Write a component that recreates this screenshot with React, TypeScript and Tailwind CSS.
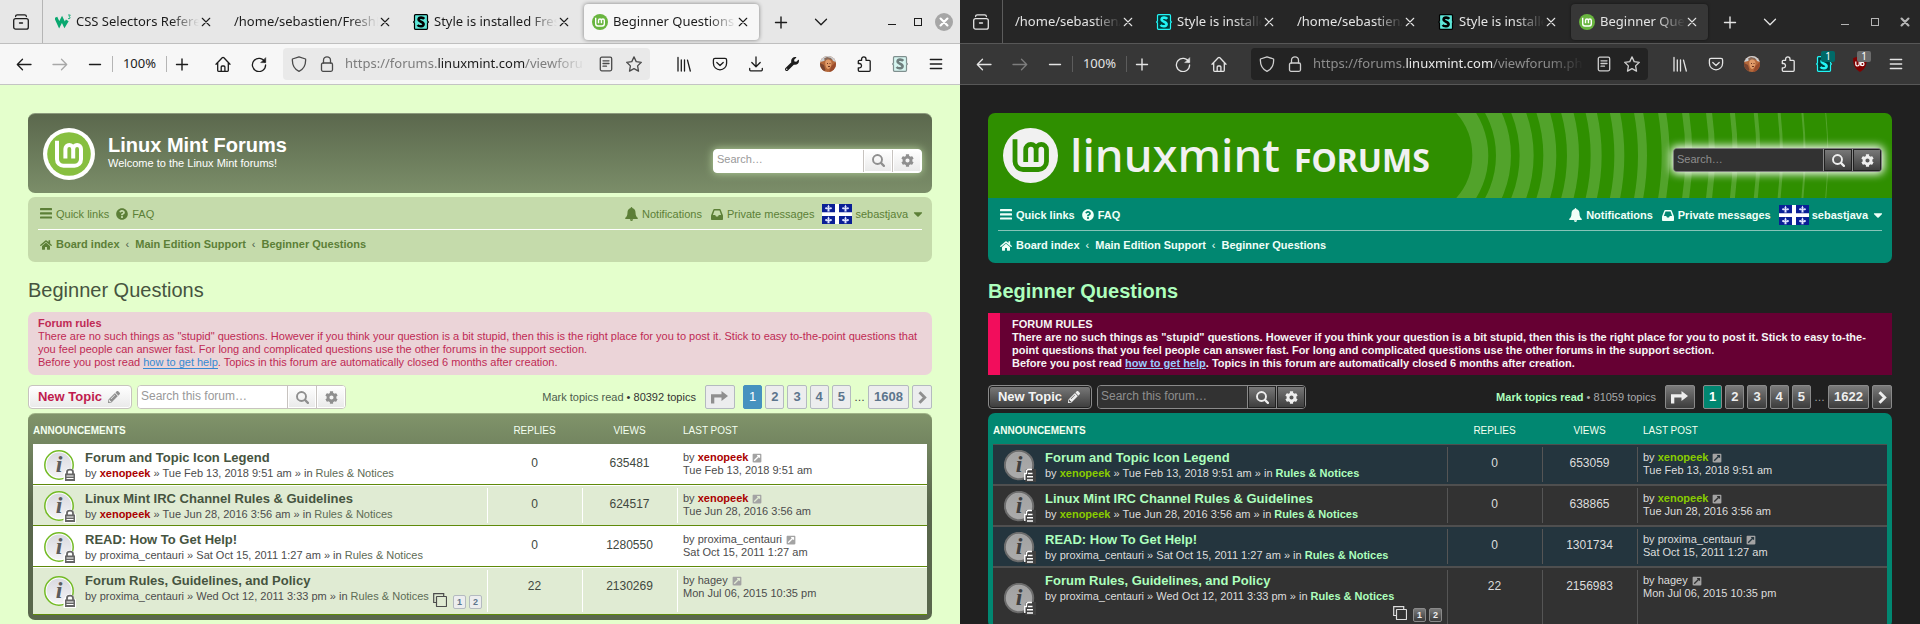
import React from "react";
import {
  FaQuestionCircle,
  FaHome,
  FaCog,
  FaPencilAlt,
  FaExternalLinkSquareAlt,
  FaCaretDown,
  FaWrench,
} from "react-icons/fa";

/* ---------- themes ---------- */

const light = {
  id: "light",
  window: "bg-[#e4ffcc] text-[#4c5d4d]",
  tabBar: "bg-[#e7e7e7] border-[#bfbfbf] text-[#1c1c1c]",
  divider: "bg-[#b5b5b5]",
  toolbar: "bg-[#f7f7f7] border-[#c4c4c4] text-[#1c1c1c]",
  activeTab: "bg-[#f7f7f7] shadow-[0_0_4px_rgba(0,0,0,0.45)]",
  dim: "text-[#a8a8a8]",
  urlBar: "bg-[#e9e9e9] text-[#4a4a4a]",
  urlSoft: "text-[#7c7c7c]",
  urlStrong: "text-[#1c1c1c]",
  url: "/viewforu",
  nav: "mt-1 rounded-[7px] bg-[#c5dbab] text-[#5c7f37]",
  navRow: "border-white font-normal pt-0.5",
  chevron: "text-[#4c5d4d]",
  heading: "text-[#46543f]",
  input: "bg-white text-[#333] placeholder:text-[#999]",
  headBox: "border-white bg-white shadow-[0_0_9px_#b9d69e]",
  forumBox: "border-[#c7c3bf] bg-white",
  boxButton: "border-[#c7c3bf] bg-linear-to-b from-white to-[#e9e9e9] text-[#8f8f8f] shadow-[inset_0_0_0_1px_#fff]",
  newTopic: "border-[#c7c3bf] bg-linear-to-b from-white to-[#e9e9e9] text-[#c01b4d] shadow-[inset_0_0_0_1px_#fff]",
  pencil: "text-[#8f8f8f]",
  mark: "text-[#4c5d4d]",
  count: "text-[#333]",
  page: "border-[#b4bac0] bg-[#ecedee] text-[#5c758c]",
  pageArrow: "text-[#8f8f8f]",
  pageOn: "border-[#4692bf] bg-[#4692bf] text-white font-normal",
  table: "border-t border-[#9fb387] bg-linear-to-b from-[#80946a] to-[#59674c] to-45% pb-[5px]",
  thead: "h-[30px]",
  rows: ["bg-white", "bg-[#e0ebd3]"],
  cell: "border-t border-t-white border-b border-b-[#5f8a0a]",
  sep: "bg-[linear-gradient(#fff,#fff)]",
  title: "text-[#46543f]",
  text: "text-[#4c4c4c]",
  user: "text-[#aa0000]",
  forum: "text-[#5d6b55]",
  num: "text-[#404840]",
  subRow: "flex items-start",
  subPages: "ml-auto mt-[5px]",
  ext: "text-[#a3a3a3]",
};

const dark: typeof light = {
  id: "dark",
  window: "bg-[#202020] text-[#dddddd]",
  tabBar: "bg-[#262626] border-[#575757] text-[#e4e4e4]",
  divider: "bg-[#5c5c5c]",
  toolbar: "bg-[#373737] border-[#575757] text-[#e4e4e4]",
  activeTab: "bg-[#373737] shadow-[0_0_3px_rgba(0,0,0,0.5)]",
  dim: "text-[#7d7d7d]",
  urlBar: "bg-[#232323] text-[#cfcfcf]",
  urlSoft: "text-[#8e8e8e]",
  urlStrong: "text-[#e8e8e8]",
  url: "/viewforum.php",
  nav: "rounded-b-[7px] bg-[#018771] text-[#f0fff8]",
  navRow: "border-[#86c4b8] font-bold pt-0.5",
  chevron: "text-[#f0fff8]",
  heading: "text-[#adffbd] font-bold",
  input: "bg-[#323232] text-[#ddd] placeholder:text-[#8e8e8e]",
  headBox: "border-[#7d7d7d] bg-[#323232] shadow-[0_0_8px_2px_#fff]",
  forumBox: "border-[#8a8a8a] bg-[#323232]",
  boxButton: "border-[#8a8a8a] bg-linear-to-b from-[#7b7b7b] to-[#3c3c3c] text-[#eeeeee] shadow-[inset_0_0_0_1px_#202020]",
  newTopic: "border-[#8a8a8a] bg-linear-to-b from-[#7b7b7b] to-[#3c3c3c] text-[#f4f4f4] shadow-[inset_0_0_0_1px_#202020]",
  pencil: "text-[#eeeeee]",
  mark: "text-[#adffbd] font-bold",
  count: "text-[#a9a9a9]",
  page: "border-[#8a8a8a] bg-linear-to-b from-[#7b7b7b] to-[#3c3c3c] text-[#eeeeee]",
  pageArrow: "text-[#eeeeee]",
  pageOn: "border-[#8a8a8a] bg-[#018771] text-white font-bold",
  table: "bg-[#018771]",
  thead: "h-[31px]",
  rows: ["bg-[#24353e]", "bg-[#323232]"],
  cell: "border-y border-[#4f4f4f]",
  sep: "bg-[linear-gradient(#555,#555)]",
  title: "text-[#adffbd]",
  text: "text-[#dddddd]",
  user: "text-[#88cc00]",
  forum: "text-[#adffbd] font-bold",
  num: "text-[#dddddd]",
  subRow: "flex flex-col items-start",
  subPages: "self-end mt-[5px]",
  ext: "text-[#a3a3a3]",
};

type Theme = typeof light;

/* ---------- icons ---------- */

function Icon({ children, size = 16, w = 1.3 }: { children: React.ReactNode; size?: number; w?: number }) {
  return (
    <svg
      width={size}
      height={size}
      viewBox="0 0 16 16"
      fill="none"
      stroke="currentColor"
      strokeWidth={w}
      strokeLinecap="round"
      strokeLinejoin="round"
      className="shrink-0"
      aria-hidden="true"
    >
      {children}
    </svg>
  );
}

const ArchiveIcon = () => (
  <Icon>
    <path d="M2.600 2.600Q2.600.800 4.400.800h7.200q1.800 0 1.800 1.800" strokeWidth="1.200" />
    <rect x=".7" y="4.600" width="14.600" height="10.600" rx="2" />
    <path d="M6.500 9h3" />
  </Icon>
);
const BackIcon = () => (
  <Icon>
    <path d="M15 8.5H1.5M6.5 3.3 1.3 8.500l5.200 5.200" />
  </Icon>
);
const ForwardIcon = () => (
  <Icon>
    <path d="M1 8.500h13.500M9.500 3.300l5.200 5.200-5.200 5.200" />
  </Icon>
);
const MinusIcon = () => (
  <Icon>
    <path d="M2.500 8.500h11" strokeWidth="1.400" />
  </Icon>
);
const PlusIcon = () => (
  <Icon>
    <path d="M2.500 8.500h11M8 3v11" strokeWidth="1.400" />
  </Icon>
);
const HomeOutline = () => (
  <Icon>
    <path d="m1 8.300 6.200-6.600a1.200 1.200 0 0 1 1.700 0L15 8.300M2.700 7v7.500a.8.8 0 0 0 .8.8h9a.8.8 0 0 0 .8-.8V7M6.200 15v-4a1 1 0 0 1 1-1h1.700a1 1 0 0 1 1 1v4" />
  </Icon>
);
const ReloadIcon = () => (
  <Icon>
    <path d="M13.900 6A6.600 6.600 0 1 0 14.600 9" />
    <path d="M14.700 2v4.600h-4.600z" fill="currentColor" strokeWidth=".6" />
  </Icon>
);
const ShieldIcon = () => (
  <Icon>
    <path d="M8 .8 14.600 3c.3 5-1.200 9.800-6.600 12.300C2.600 12.800 1.100 8 1.400 3z" />
  </Icon>
);
const LockIcon = () => (
  <Icon>
    <rect x="2.500" y="7" width="11" height="8.300" rx="1.500" />
    <path d="M4.500 7V4.300a3.500 3.500 0 0 1 7 0V7" />
  </Icon>
);
const ReaderIcon = () => (
  <Icon>
    <rect x="2.300" y="1.200" width="11.400" height="13.600" rx="1.500" />
    <path d="M5 4.800h6M5 7.500h6M5 10.200h3.500" />
  </Icon>
);
const StarIcon = () => (
  <Icon>
    <path d="m8 .9 2.200 4.700 5.100.7-3.700 3.600.9 5.200L8 12.600l-4.500 2.500.9-5.200L.7 6.300l5.100-.7z" />
  </Icon>
);
const LibraryIcon = () => (
  <Icon>
    <path d="M2 1.500v13.500M5.300 4v11M8.500 4v11M11.500 4.200 14.300 15" />
  </Icon>
);
const PocketIcon = () => (
  <Icon>
    <path d="M3 2.300h10a1.600 1.600 0 0 1 1.600 1.600v3.300a6.600 6.600 0 0 1-13.200 0V3.900A1.600 1.600 0 0 1 3 2.300z" />
    <path d="m4.800 6.500 3.200 3 3.200-3" />
  </Icon>
);
const DownloadIcon = () => (
  <Icon>
    <path d="M8 1v9.500M3.800 6.500 8 10.700l4.200-4.200M1.700 12.500v1.300a1 1 0 0 0 1 1h10.600a1 1 0 0 0 1-1v-1.300" />
  </Icon>
);
const PuzzleIcon = () => (
  <Icon>
    <path d="M5.600 4.300V3a2.200 2.200 0 0 1 4.400 0v1.300h3.200a1 1 0 0 1 1 1v9a1 1 0 0 1-1 1H3.300a1 1 0 0 1-1-1v-2.500h1.500a2.200 2.200 0 0 0 0-4.300H2.300V5.300a1 1 0 0 1 1-1z" />
  </Icon>
);
const MenuIcon = () => (
  <Icon>
    <path d="M2.300 3.500h11.400M2.300 8h11.400M2.300 12.500h11.400" />
  </Icon>
);
const ChevronIcon = () => (
  <Icon>
    <path d="m2.500 5.200 5.500 5.500 5.500-5.500" />
  </Icon>
);
const CloseIcon = () => (
  <Icon size={10}>
    <path d="m2 2 12 12M14 2 2 14" strokeWidth="1.800" />
  </Icon>
);

const BarsIcon = () => (
  <svg width="12" height="12" viewBox="0 0 12 12" fill="currentColor" className="shrink-0" aria-hidden="true">
    <rect y="0" width="12" height="2.200" rx=".5" />
    <rect y="4.200" width="12" height="2.200" rx=".5" />
    <rect y="8.400" width="12" height="2.200" rx=".5" />
  </svg>
);

const BellIcon = () => (
  <svg width="13" height="14" viewBox="0 0 13 14" fill="currentColor" className="shrink-0" aria-hidden="true">
    <path d="M6.500 0q.8 0 .8 1C9.600 1.500 10.500 3.500 10.500 5.500c0 3 1 4.500 2.500 5.500q0 1-1 1H1q-1 0-1-1c1.500-1 2.500-2.500 2.500-5.500 0-2 .9-4 3.200-4.500q0-1 .8-1zM4.900 12.300h3.200a1.600 1.600 0 0 1-3.200 0z" />
  </svg>
);

const InboxIcon = () => (
  <svg width="12" height="11" viewBox="0 0 12 11" className="shrink-0" aria-hidden="true">
    <path
      fill="currentColor"
      fillRule="evenodd"
      d="M2.400.5Q2.600 0 3.200 0h5.600q.6 0 .8.5L11.800 6q.2.400.2.900v3.300q0 .8-.8.800H.8Q0 11 0 10.200V6.900Q0 6.400.2 6zM3.500 1.600 1.900 6h2.300l.8 1.600h2L7.800 6h2.300L8.500 1.600z"
    />
  </svg>
);

const SearchIcon = () => (
  <svg width="13" height="13" viewBox="0 0 13 13" fill="none" stroke="currentColor" className="shrink-0" aria-hidden="true">
    <circle cx="5.500" cy="5.500" r="4.500" strokeWidth="1.900" />
    <path d="m8.900 8.900 3 3" strokeWidth="2.200" strokeLinecap="round" />
  </svg>
);

const NextIcon = () => (
  <svg width="9" height="13" viewBox="0 0 9 13" fill="none" stroke="currentColor" className="shrink-0" aria-hidden="true">
    <path d="m1.500 1.300 5.200 5.200-5.200 5.200" strokeWidth="2.900" />
  </svg>
);

function Avatar() {
  return (
    <svg width="16" height="16" viewBox="0 0 16 16" className="shrink-0" aria-hidden="true">
      <defs>
        <clipPath id="avatar-clip">
          <circle cx="8" cy="8" r="8" />
        </clipPath>
      </defs>
      <g clipPath="url(#avatar-clip)">
        <rect width="16" height="16" fill="#b5683a" />
        <path d="M0 0h16v6l-3-1-1-2-5-1-3 3-4 1z" fill="#c9cfd4" />
        <path d="M4 2.500 7 1l4 1 1 2-4-.5-3 1.500z" fill="#8a6a58" />
        <path d="M5.500 5c2-2.500 6-1.500 6 2s-2 6-3.500 6-3.500-4-2.500-8z" fill="#e09a68" />
        <path d="m0 7 4 2 1.500 5L3 16H0z" fill="#7a4530" />
        <path d="M7 7.500h1M9.500 7.500h1M8 10.500h2" stroke="#6b3520" />
        <path d="m11.500 10 4.500-4v10h-7z" fill="#9a4c2c" />
      </g>
    </svg>
  );
}

function StylusIcon({ box, ink, edge }: { box: string; ink: string; edge: string }) {
  return (
    <svg width="16" height="16" viewBox="0 0 16 16" className="shrink-0" aria-hidden="true">
      <path
        d="M1.500 1.700q0-1 1-1h11q1 0 1 1V7l1 1-1 1v5.300q0 1-1 1h-11q-1 0-1-1V9l-1-1 1-1z"
        fill={box}
        stroke={edge}
        strokeWidth="1.200"
      />
      <path
        d="M11.200 4.900C10 3.300 5.800 3 5.600 5.400 5.400 7.800 10.700 7.600 10.600 10.200 10.500 12.800 6.200 12.900 4.600 11"
        fill="none"
        stroke={ink}
        strokeWidth="2.600"
      />
    </svg>
  );
}

const W3Icon = () => (
  <svg width="16" height="16" viewBox="0 0 16 16" className="shrink-0" aria-hidden="true">
    <path d="M.8 3.500 4.200 10.800 7 5.300l2.600 5.500 2.700-4.400" fill="none" stroke="#0aa870" strokeWidth="3.200" />
    <path d="M13 1h2.300l-1.200 1.700q1.500.3.900 1.500-.7 1-2 .3" fill="none" stroke="#0aa870" strokeWidth=".9" />
  </svg>
);

const MintFavicon = () => (
  <svg width="16" height="16" viewBox="0 0 52 52" className="shrink-0" aria-hidden="true">
    <circle cx="26" cy="26" r="26" fill="#69b53f" />
    <path
      d="M12 12v20a7 7 0 0 0 7 7h14a7 7 0 0 0 7-7V21a4.700 4.700 0 0 0-9.400 0v9M30.600 21a4.700 4.700 0 0 0-9.400 0v9"
      fill="none"
      stroke="#fff"
      strokeWidth="4.500"
    />
  </svg>
);

const UblockIcon = () => (
  <svg width="16" height="16" viewBox="0 0 16 16" className="shrink-0" aria-hidden="true">
    <path d="M8 0 14.800 2c.4 6-1.600 11-6.800 14C2.800 13 .8 8 1.200 2z" fill="#800000" />
    <path d="M3.800 5.500v2.800a1.500 1.500 0 0 0 3.400 0V5.500v2.800M8.800 4v5.500" fill="none" stroke="#fff" strokeWidth="1.200" />
    <circle cx="10.300" cy="8" r="1.700" fill="none" stroke="#fff" strokeWidth="1.200" />
  </svg>
);

function MintLogo() {
  return (
    <svg width="52" height="52" viewBox="0 0 52 52" className="shrink-0" aria-hidden="true">
      <circle cx="26" cy="26" r="26" fill="#fff" />
      <circle cx="26" cy="26" r="21.800" fill="#87bf40" />
      <path
        d="M14 12.700v18.500a6.500 6.500 0 0 0 6.500 6.500h11a6.500 6.500 0 0 0 6.500-6.500V21a3.900 3.900 0 0 0-7.800 0v9.500M30.200 21a3.900 3.900 0 0 0-7.800 0v9.500"
        fill="none"
        stroke="#fff"
        strokeWidth="4"
      />
    </svg>
  );
}

function MintLogoFlat() {
  return (
    <svg width="55" height="55" viewBox="0 0 55 55" className="shrink-0" aria-hidden="true">
      <circle cx="27.500" cy="27.500" r="27.500" fill="#f1f1f1" />
      <path
        d="M12 11.300v22.200a8 8 0 0 0 8 8h15.500a8 8 0 0 0 8-8V21.500a5.200 5.200 0 0 0-10.400 0v12.500M33.100 21.500a5.200 5.200 0 0 0-10.400 0v12.500"
        fill="none"
        stroke="#2f8f00"
        strokeWidth="4.800"
      />
    </svg>
  );
}

const fleur = "M0-3.200Q1.500-1.500.6.200 1.500-1.300 3-.5 3.300.8 1.800 1H.7L1 2.800H-1L-.7 1H-1.800Q-3.300.8-3-.5-1.500-1.300-.6.200-1.500-1.500 0-3.200z";

function Flag() {
  const spots = [
    [6.500, 4.200],
    [23.500, 4.200],
    [6.500, 16],
    [23.500, 16],
  ];
  return (
    <svg width="30" height="20" viewBox="0 0 30 20" className="shrink-0" aria-hidden="true">
      <rect width="30" height="20" fill="#0a1f96" />
      <path d="M13 0h4v20h-4zM0 8.300h30v3.600H0z" fill="#fff" />
      {spots.map(([x, y]) => (
        <path key={`${x}-${y}`} d={fleur} transform={`translate(${x} ${y}) scale(1.150)`} fill="#dfe4ff" />
      ))}
    </svg>
  );
}

function TopicIcon({ theme }: { theme: Theme }) {
  const isLight = theme.id === "light";
  return (
    <svg width="32" height="32" viewBox="0 0 32 32" className="-mr-0.5 -mb-0.5 shrink-0" aria-hidden="true">
      <defs>
        <linearGradient id={`disc-${theme.id}`} x1="0" y1="0" x2="0" y2="1">
          <stop offset="0" stopColor={isLight ? "#d9d9df" : "#a2a2a2"} />
          <stop offset="1" stopColor={isLight ? "#f4f4f6" : "#ababab"} />
        </linearGradient>
      </defs>
      <circle cx="15" cy="15" r="14.200" fill={isLight ? "#fff" : "#a6a6a6"} stroke={isLight ? "#73ba25" : "#6c6c6c"} strokeWidth={isLight ? 1.500 : 2} />
      <circle cx="15" cy="15" r="12.500" fill={`url(#disc-${theme.id})`} />
      <text
        x="15"
        y="22"
        textAnchor="middle"
        className="font-['Liberation_Serif',serif] text-[24px] font-bold italic"
        fill={isLight ? "#5c5c5c" : "#3f3f3f"}
      >
        i
      </text>
      {isLight ? (
        <>
          <path d="M19.500 23q1.500-1 2-2.500 1-2.500 4-2.500t4.500 3v2h2v9H19.500z" fill="#fff" />
          <path d="M23 25v-3q0-2.300 3-2.300t3 2.300v3" fill="none" stroke="#666" strokeWidth="1.800" />
          <rect x="21" y="23.500" width="10" height="7.500" fill="#666" />
          <path d="M22.500 26h7M22.500 28.500h7" stroke="#fff" />
        </>
      ) : (
        <>
          <path d="M22 19h10v13H21v-8z" fill="#3f3f3f" />
          <path d="M20.800 30v-6.500h1.700v-2q0-2 2-2H28" fill="none" stroke="#fff" strokeWidth="1.400" />
          <path d="M24 23.500h4.500M23 26.800h6M23 30h6" stroke="#fff" strokeWidth="1.400" />
        </>
      )}
    </svg>
  );
}

const CloneIcon = () => (
  <svg width="14" height="14" viewBox="0 0 14 14" fill="none" stroke="currentColor" strokeWidth="1.200" aria-hidden="true">
    <path d="M3.500 9.500H.7V.7h10v2.800" />
    <rect x="3.500" y="3.500" width="10" height="10" rx=".5" />
  </svg>
);

const JumpIcon = () => (
  <svg width="17" height="13" viewBox="0 0 17 13" fill="currentColor" aria-hidden="true">
    <path d="M0 12.500V3.200h10.500V0L17 5l-6.500 5V6.500H3.300v6z" />
  </svg>
);

/* ---------- browser chrome ---------- */

interface TabInfo {
  title: string;
  icon?: React.ReactNode;
  active?: boolean;
}

function Tab({ tab, theme, width }: { tab: TabInfo; theme: Theme; width: string }) {
  return (
    <div className={`${width} min-w-0 px-0.5 py-1`}>
      <div className={`flex h-9 items-center gap-[5px] rounded pr-1.5 pl-2 ${tab.active ? theme.activeTab : ""}`}>
        {tab.icon}
        <span className="-mr-1 min-w-0 flex-1 overflow-hidden whitespace-nowrap [mask-image:linear-gradient(to_right,#000_calc(100%-28px),transparent)]">
          {tab.title}
        </span>
        <button aria-label="Close tab" className="-ml-1 flex h-5 w-5 shrink-0 items-center justify-center">
          <CloseIcon />
        </button>
      </div>
    </div>
  );
}

function BarButton({ label, children, className = "w-9" }: { label: string; children: React.ReactNode; className?: string }) {
  return (
    <button aria-label={label} className={`flex h-9 shrink-0 items-center justify-center ${className}`}>
      {children}
    </button>
  );
}

function Badge({ className }: { className: string }) {
  return (
    <span
      className={`absolute -top-[5px] left-[5px] h-[11px] w-[14px] rounded-[2px] text-center text-[10px] leading-[11px] text-white ${className}`}
    >
      1
    </span>
  );
}

function Chrome({ theme, tabs }: { theme: Theme; tabs: TabInfo[] }) {
  const isLight = theme.id === "light";
  return (
    <header className="font-['Noto_Sans',sans-serif] text-[13px]">
      <div className={`flex h-11 items-start border-b ${theme.tabBar}`}>
        <BarButton label="Recent browsing" className="h-11 w-[42px]">
          <ArchiveIcon />
        </BarButton>
        <div className={`mr-0.5 h-full w-px shrink-0 ${theme.divider}`} />
        {tabs.map((tab, i) => (
          <Tab key={i} tab={tab} theme={theme} width={isLight ? "w-[179px]" : "w-[141px]"} />
        ))}
        <BarButton label="New tab" className="h-11 w-10">
          <PlusIcon />
        </BarButton>
        <BarButton label="List all tabs" className="h-11 w-10">
          <ChevronIcon />
        </BarButton>
        <div className={`ml-auto flex items-center pt-1 ${isLight ? "pr-[3px]" : "pr-0 text-[#b5b5b5]"}`}>
          <BarButton label="Minimize" className={isLight ? "w-[26px]" : "w-[30px]"}>
            <span className="mt-[5px] h-px w-2 bg-current" />
          </BarButton>
          <BarButton label="Maximize" className={isLight ? "w-[26px]" : "w-[30px]"}>
            <span className="h-2 w-2 border border-current" />
          </BarButton>
          <BarButton label="Close window" className={isLight ? "w-[26px]" : "w-[30px]"}>
            <span className={`flex h-[18px] w-[18px] items-center justify-center rounded-full ${isLight ? "bg-[#a6a6a6] text-white" : ""}`}>
              <Icon size={10} w={3.500}>
                <path d="m2.500 2.500 11 11M13.500 2.500l-11 11" />
              </Icon>
            </span>
          </BarButton>
        </div>
      </div>
      <div className={`flex h-[41px] items-center border-b px-1.5 ${theme.toolbar}`}>
        <BarButton label="Back">
          <BackIcon />
        </BarButton>
        <BarButton label="Forward" className={`w-9 ${theme.dim}`}>
          <ForwardIcon />
        </BarButton>
        <BarButton label="Zoom out" className="w-[34px]">
          <MinusIcon />
        </BarButton>
        <div className={`h-4 w-px shrink-0 ${theme.divider}`} />
        <button className="h-9 w-[53px] shrink-0 text-center">100%</button>
        <div className={`h-4 w-px shrink-0 ${theme.divider}`} />
        <BarButton label="Zoom in" className="mr-2 w-[30px]">
          <PlusIcon />
        </BarButton>
        <BarButton label={isLight ? "Home" : "Reload"}>{isLight ? <HomeOutline /> : <ReloadIcon />}</BarButton>
        <BarButton label={isLight ? "Reload" : "Home"}>{isLight ? <ReloadIcon /> : <HomeOutline />}</BarButton>
        <div
          className={`flex h-8 min-w-0 flex-1 items-center rounded px-2 ${theme.urlBar} ${isLight ? "mr-4 ml-1.5" : "mr-[14px] ml-[14px]"}`}
        >
          <ShieldIcon />
          <span className="w-3 shrink-0" />
          <LockIcon />
          <span
            className={`ml-[10px] min-w-0 flex-1 overflow-hidden whitespace-nowrap [mask-image:linear-gradient(to_right,#000_calc(100%-36px),transparent)] ${theme.urlSoft}`}
          >
            https://forums.<span className={theme.urlStrong}>linuxmint.com</span>
            {theme.url}
          </span>
          <BarButton label="Reader view" className="ml-1.5 w-7">
            <ReaderIcon />
          </BarButton>
          <BarButton label="Bookmark" className="-mr-1.5 w-7">
            <StarIcon />
          </BarButton>
        </div>
        <BarButton label="Library">
          <LibraryIcon />
        </BarButton>
        <BarButton label="Pocket">
          <PocketIcon />
        </BarButton>
        {isLight && (
          <>
            <BarButton label="Downloads">
              <DownloadIcon />
            </BarButton>
            <BarButton label="Tools">
              <FaWrench size={14} />
            </BarButton>
          </>
        )}
        <BarButton label="Account">
          <Avatar />
        </BarButton>
        <BarButton label="Extensions">
          <PuzzleIcon />
        </BarButton>
        {isLight ? (
          <BarButton label="Stylus">
            <StylusIcon box="#d6f5f0" ink="#6f7f7e" edge="#7f8f8e" />
          </BarButton>
        ) : (
          <>
            <BarButton label="Stylus">
              <span className="relative">
                <StylusIcon box="#003a3a" ink="#22f5f5" edge="#22f5f5" />
                <Badge className="bg-[#006a68]" />
              </span>
            </BarButton>
            <BarButton label="uBlock">
              <span className="relative">
                <UblockIcon />
                <Badge className="bg-[#6b6b6b]" />
              </span>
            </BarButton>
          </>
        )}
        <BarButton label="Menu">
          <MenuIcon />
        </BarButton>
      </div>
    </header>
  );
}

/* ---------- forum page ---------- */

function SearchBox({ theme, frame, label, input }: { theme: Theme; frame: string; label: string; input: string }) {
  return (
    <form className={`flex h-6 w-[209px] overflow-hidden rounded border ${frame}`} onSubmit={(e) => e.preventDefault()}>
      <input type="search" aria-label={label} placeholder={label} className={`min-w-0 flex-1 px-[3px] pb-0.5 outline-none ${input} ${theme.input}`} />
      <button aria-label="Search" className={`flex w-[29px] items-center justify-center border-l ${theme.boxButton}`}>
        <SearchIcon />
      </button>
      <button aria-label="Advanced search" className={`flex w-[29px] items-center justify-center border-l ${theme.boxButton}`}>
        <FaCog size={13} />
      </button>
    </form>
  );
}

function LightBanner() {
  return (
    <div className="flex h-20 items-center rounded-[7px] border-t border-[#8c9a7d] bg-linear-to-b from-[#5b684d] to-[#7b8e69] pr-2.5 pl-[15px]">
      <MintLogo />
      <div className="ml-[13px] pb-1 text-white">
        <h1 className="text-[20px] leading-[24px] font-bold">Linux Mint Forums</h1>
        <p className="text-[11px] leading-[13px]">Welcome to the Linux Mint forums!</p>
      </div>
      <div className="ml-auto pt-[14px]">
        <SearchBox theme={light} frame={light.headBox} label="Search…" input="text-[11px]" />
      </div>
    </div>
  );
}

function DarkBanner() {
  const bands = Array.from({ length: 16 }, (_, k) => ({ r: 72.300 + 23.170 * k, w: 16 - k }));
  return (
    <div className="relative flex h-[85px] items-center overflow-hidden rounded-t-[7px] bg-[#2f8f00] pr-2.5 pl-[15px]">
      <svg className="absolute top-0 right-0" width="484" height="85" viewBox="0 0 484 85" aria-hidden="true">
        {bands.map((b) => (
          <circle key={b.r} cx="0" cy="42.500" r={b.r} fill="none" stroke="#52a32b" strokeWidth={b.w} />
        ))}
      </svg>
      <MintLogoFlat />
      <h1 className="ml-3 flex items-baseline gap-3.5 pt-0.5 font-['Noto_Sans',sans-serif] leading-[60px] text-[#f1f1f1]">
        <span className="text-[46px] font-medium">linuxmint</span>
        <span className="text-[32px] font-bold">FORUMS</span>
      </h1>
      <div className="relative ml-auto pt-[9px]">
        <SearchBox theme={dark} frame={dark.headBox} label="Search…" input="text-[11px]" />
      </div>
    </div>
  );
}

function NavBar({ theme }: { theme: Theme }) {
  const link = "flex items-center gap-1";
  return (
    <nav className={`px-2.5 pb-[11px] text-[11px] leading-[13px] ${theme.nav}`}>
      <div className={`flex h-[33px] items-center border-b pl-0.5 ${theme.navRow}`}>
        <a href="#quick" className={link}>
          <BarsIcon />
          Quick links
        </a>
        <a href="#faq" className={`${link} ml-[7px]`}>
          <FaQuestionCircle size={12} />
          FAQ
        </a>
        <a href="#notifications" className={`${link} ml-auto`}>
          <BellIcon />
          Notifications
        </a>
        <a href="#messages" className={`${link} ml-[9px]`}>
          <InboxIcon />
          Private messages
        </a>
        <a href="#user" className="ml-2 flex items-center gap-[3px]">
          <Flag />
          <span>sebastjava</span>
          <FaCaretDown size={14} className="-mr-[3px]" />
        </a>
      </div>
      <div className="flex h-[21px] items-end gap-1.5 pl-0.5 font-bold">
        <a href="#index" className={link}>
          <FaHome size={12} />
          Board index
        </a>
        <span className={`font-normal ${theme.chevron}`}>‹</span>
        <a href="#main">Main Edition Support</a>
        <span className={`font-normal ${theme.chevron}`}>‹</span>
        <a href="#beginner">Beginner Questions</a>
      </div>
    </nav>
  );
}

function Rules({ theme }: { theme: Theme }) {
  const isLight = theme.id === "light";
  return (
    <section
      className={`text-[11px] leading-[13px] ${
        isLight
          ? "rounded-[7px] bg-[#ebd4d8] px-2.5 pt-[5px] pb-1.5 text-[#bf2a54]"
          : "border-l-12 border-[#f20d5c] bg-[#660033] px-3 py-[5px] font-bold text-[#f5f5f5]"
      }`}
    >
      <strong className={isLight ? "" : "uppercase"}>Forum rules</strong>
      <p>
        There are no such things as "stupid" questions. However if you think your question is a bit stupid, then this is
        the right place for you to post it. Stick to easy to-the-point questions that you feel people can answer fast. For
        long and complicated questions use the other forums in the support section.
        <br />
        Before you post read{" "}
        <a href="#help" className={isLight ? "border-b border-[#368ad2] text-[#368ad2]" : "text-[#99ccff] underline"}>
          how to get help
        </a>
        . Topics in this forum are automatically closed 6 months after creation.
      </p>
    </section>
  );
}

function ActionBar({ theme, total, lastPage }: { theme: Theme; total: string; lastPage: string }) {
  const btn = "flex h-6 items-center justify-center rounded-[2px] border px-[5px]";
  return (
    <div className="mt-2.5 flex items-center">
      <button className={`mr-[5px] flex h-6 w-[104px] items-center justify-center gap-1.5 rounded border pr-0.5 text-[13px] font-bold ${theme.newTopic}`}>
        New Topic
        <FaPencilAlt size={12} className={theme.pencil} />
      </button>
      <SearchBox theme={theme} frame={theme.forumBox} label="Search this forum…" input="text-[12px]" />
      <p className={`mr-[9px] ml-auto text-[11px] ${theme.count}`}>
        <a href="#mark" className={theme.mark}>
          Mark topics read
        </a>{" "}
        • {total} topics
      </p>
      <div className="flex items-center gap-[3px] text-[13px] font-bold">
        <button aria-label="Jump to page" className={`${btn} mr-[5px] w-[30px] ${theme.page}`}>
          <span className={theme.pageArrow}>
            <JumpIcon />
          </span>
        </button>
        <span className={`${btn} ${theme.pageOn}`}>1</span>
        {["2", "3", "4", "5"].map((n) => (
          <a key={n} href={`#page-${n}`} className={`${btn} ${theme.page}`}>
            {n}
          </a>
        ))}
        <span className={`text-[11px] font-normal ${theme.count}`}>…</span>
        <a href="#last" className={`${btn} ${theme.page}`}>
          {lastPage}
        </a>
        <a href="#next" aria-label="Next page" className={`${btn} w-5 ${theme.page}`}>
          <span className={theme.pageArrow}>
            <NextIcon />
          </span>
        </a>
      </div>
    </div>
  );
}

interface Topic {
  title: string;
  author: string;
  staff?: boolean;
  date: string;
  replies: string;
  lastBy: string;
  lastDate: string;
  pages?: string[];
}

const topics: Topic[] = [
  { title: "Forum and Topic Icon Legend", author: "xenopeek", staff: true, date: "Tue Feb 13, 2018 9:51 am", replies: "0", lastBy: "xenopeek", lastDate: "Tue Feb 13, 2018 9:51 am" },
  { title: "Linux Mint IRC Channel Rules & Guidelines", author: "xenopeek", staff: true, date: "Tue Jun 28, 2016 3:56 am", replies: "0", lastBy: "xenopeek", lastDate: "Tue Jun 28, 2016 3:56 am" },
  { title: "READ: How To Get Help!", author: "proxima_centauri", date: "Sat Oct 15, 2011 1:27 am", replies: "0", lastBy: "proxima_centauri", lastDate: "Sat Oct 15, 2011 1:27 am" },
  { title: "Forum Rules, Guidelines, and Policy", author: "proxima_centauri", date: "Wed Oct 12, 2011 3:33 pm", replies: "22", lastBy: "hagey", lastDate: "Mon Jul 06, 2015 10:35 pm", pages: ["1", "2"] },
];

function TopicTable({ theme, views }: { theme: Theme; views: string[] }) {
  const sep = `bg-no-repeat bg-[length:1px_calc(100%-4px)] bg-[position:0_2px] ${theme.sep}`;
  return (
    <div className={`mt-1 rounded-[7px] px-[5px] ${theme.table}`}>
      <table className="w-full table-fixed border-separate border-spacing-0">
        <thead>
          <tr className={`text-[10px] text-[#f4fff0] ${theme.thead}`}>
            <th className="pt-[3px] text-left font-bold">ANNOUNCEMENTS</th>
            <th className="w-[95px] pt-[3px] font-normal">REPLIES</th>
            <th className="w-[95px] pt-[3px] font-normal">VIEWS</th>
            <th className="w-[250px] pt-[3px] pl-1.5 text-left font-normal">LAST POST</th>
          </tr>
        </thead>
        <tbody>
          {topics.map((t, i) => {
            const user = t.staff ? `font-bold ${theme.user}` : "";
            return (
              <tr key={t.title} className={`align-top text-[11px] leading-[13px] ${theme.rows[i % 2]} ${theme.text}`}>
                <td className={theme.cell}>
                  <div className="flex items-center gap-[11px] py-1 pr-[5px] pl-[11px]">
                    <TopicIcon theme={theme} />
                    <div className="min-w-0 flex-1">
                      <a href="#topic" className={`block text-[13px] leading-[17px] font-bold ${theme.title}`}>
                        {t.title}
                      </a>
                      <div className={`mt-px ${theme.subRow}`}>
                        <p className="whitespace-nowrap">
                          by <a href="#user" className={user}>{t.author}</a> » {t.date} » in{" "}
                          <a href="#rules" className={theme.forum}>
                            Rules &amp; Notices
                          </a>
                        </p>
                        {t.pages && (
                          <div className={`flex items-start pb-px text-[9px] font-bold ${theme.subPages}`}>
                            <span className="-mt-0.5 mr-1.5">
                              <CloneIcon />
                            </span>
                            {t.pages.map((p, k) => (
                              <a
                                key={p}
                                href={`#p${p}`}
                                className={`flex h-[14px] w-[13px] items-center justify-center rounded-[2px] border ${k ? "ml-[3px]" : ""} ${theme.page}`}
                              >
                                {p}
                              </a>
                            ))}
                          </div>
                        )}
                      </div>
                    </div>
                  </div>
                </td>
                <td className={`pt-[11px] text-center text-[12px] leading-[15px] ${theme.cell} ${sep} ${theme.num}`}>{t.replies}</td>
                <td className={`pt-[11px] text-center text-[12px] leading-[15px] ${theme.cell} ${sep} ${theme.num}`}>{views[i]}</td>
                <td className={`pt-1.5 pl-1.5 ${theme.cell} ${sep}`}>
                  <div className="flex items-center">
                    by&nbsp;
                    <a href="#user" className={user}>
                      {t.lastBy}
                    </a>
                    <a href="#latest" aria-label="View the latest post" className={`ml-1 ${theme.ext}`}>
                      <FaExternalLinkSquareAlt size={10} />
                    </a>
                  </div>
                  <div>{t.lastDate}</div>
                </td>
              </tr>
            );
          })}
        </tbody>
      </table>
    </div>
  );
}

function BrowserWindow({
  theme,
  tabs,
  banner,
  total,
  lastPage,
  views,
}: {
  theme: Theme;
  tabs: TabInfo[];
  banner: React.ReactNode;
  total: string;
  lastPage: string;
  views: string[];
}) {
  return (
    <section className={`min-w-0 flex-1 ${theme.window}`}>
      <Chrome theme={theme} tabs={tabs} />
      <main className="px-7 pt-7">
        {banner}
        <NavBar theme={theme} />
        <h2 className={`mt-[17px] mb-[10px] text-[20px] leading-[23px] ${theme.heading}`}>Beginner Questions</h2>
        <Rules theme={theme} />
        <ActionBar theme={theme} total={total} lastPage={lastPage} />
        <TopicTable theme={theme} views={views} />
      </main>
    </section>
  );
}

const stylusTab = <StylusIcon box="#5ee6d8" ink="#000" edge="#000" />;

export default function App() {
  return (
    <div className="flex h-screen overflow-hidden font-['Liberation_Sans',Arial,sans-serif]">
      <BrowserWindow
        theme={light}
        banner={<LightBanner />}
        tabs={[
          { title: "CSS Selectors Refere", icon: <W3Icon /> },
          { title: "/home/sebastien/FreshM" },
          { title: "Style is installed Fres", icon: stylusTab },
          { title: "Beginner Questions", icon: <MintFavicon />, active: true },
        ]}
        total="80392"
        lastPage="1608"
        views={["635481", "624517", "1280550", "2130269"]}
      />
      <BrowserWindow
        theme={dark}
        banner={<DarkBanner />}
        tabs={[
          { title: "/home/sebastien/" },
          { title: "Style is installe", icon: <StylusIcon box="#003a3a" ink="#22f5f5" edge="#22f5f5" /> },
          { title: "/home/sebastien/" },
          { title: "Style is installe", icon: stylusTab },
          { title: "Beginner Ques", icon: <MintFavicon />, active: true },
        ]}
        total="81059"
        lastPage="1622"
        views={["653059", "638865", "1301734", "2156983"]}
      />
    </div>
  );
}
